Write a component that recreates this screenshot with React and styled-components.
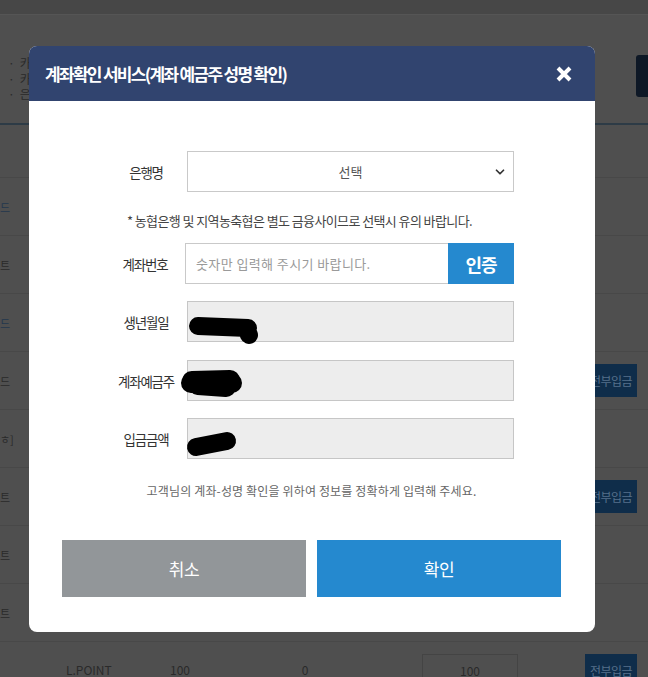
import React from 'react'
import styled, { createGlobalStyle } from 'styled-components'
import { ChevronDown } from 'lucide-react'

const GlobalStyle = createGlobalStyle`
  html, body {
    margin: 0;
    padding: 0;
    background: #4f4f4f;
    font-family: "Noto Sans CJK KR", "Noto Sans", sans-serif;
    overflow: hidden;
  }
`

/* ---------- dimmed page behind the modal ---------- */

const Page = styled.div`
  width: 648px;
  height: 677px;
  background: #4f4f4f;
  overflow: hidden;
  position: relative;
`

const TopBar = styled.div`
  height: 14px;
  background: #474747;
  border-bottom: 1px solid #555;
`

const InfoSection = styled.div`
  display: flex;
  justify-content: space-between;
  align-items: flex-start;
  height: 110px;
  padding-top: 40px;
  box-sizing: border-box;
  border-bottom: 2px solid #2d3b46;
`

const BulletList = styled.ul`
  list-style: none;
  margin: 0 0 0 8px;
  padding: 0;
  font-size: 12px;
  line-height: 15.5px;
  color: #2a2a2a;
  li::before {
    content: '·';
    margin-right: 5px;
  }
`

const DarkButton = styled.div`
  width: 40px;
  height: 42px;
  margin-right: -28px;
  background: #0e1826;
  border-radius: 3px;
`

const Table = styled.div`
  margin-top: 52px;
  border-top: 1px solid #484848;
`

const Row = styled.div`
  display: grid;
  grid-template-columns: 12px 146px 100px 94px 70px 96px 67px 52px 11px;
  align-items: ${({ $top }) => ($top ? 'start' : 'center')};
  height: 58px;
  padding-top: ${({ $top }) => ($top ? '12px' : '0')};
  border-bottom: 1px solid #484848;
  box-sizing: border-box;
  font-size: 12px;
  line-height: 16px;
  color: #2a2a2a;
`

const EdgeCell = styled.div`
  white-space: nowrap;
  font-size: 11px;
  color: ${({ $blue }) => ($blue ? '#23374d' : '#2a2a2a')};
`

const Cell = styled.div`
  text-align: ${({ $align }) => $align || 'left'};
  padding-left: ${({ $pad }) => $pad || 0}px;
  margin-top: ${({ $top }) => $top || 0}px;
`

const AmountBox = styled.div`
  height: 32px;
  border: 1px solid #444;
  display: flex;
  align-items: center;
  justify-content: center;
`

const PayAll = styled.div`
  height: 33px;
  background: #0f2d4a;
  color: #56708a;
  font-size: 12px;
  display: flex;
  align-items: center;
  justify-content: center;
  letter-spacing: -0.5px;
`

/* ---------- modal ---------- */

const Modal = styled.div`
  position: absolute;
  left: 29px;
  top: 46px;
  width: 566px;
  background: #fff;
  border-radius: 8px;
  overflow: hidden;
`

const Header = styled.div`
  height: 55px;
  background: #31446f;
  display: flex;
  align-items: center;
  justify-content: space-between;
  padding: 0 23px 0 16px;
`

const Title = styled.h2`
  margin: 0;
  color: #fff;
  font-size: 17px;
  font-weight: 700;
  letter-spacing: -1.7px;
`

const CloseButton = styled.button`
  border: 0;
  background: none;
  padding: 0;
  width: 16px;
  height: 16px;
  display: flex;
  cursor: pointer;
`

const Body = styled.div`
  padding: 50px 34px 35px 33px;
`

const Form = styled.div`
  width: 409px;
  margin-left: 43px;
`

const FieldRow = styled.div`
  display: flex;
  align-items: center;
  height: 41px;
  margin-top: ${({ $gap }) => $gap || 0}px;
`

const Label = styled.label`
  width: ${({ $w }) => $w || 82}px;
  flex-shrink: 0;
  text-align: center;
  font-size: 13.5px;
  letter-spacing: -1.2px;
  color: #333;
`

const Select = styled.div`
  flex: 1;
  height: 100%;
  box-sizing: border-box;
  border: 1px solid #c9c9c9;
  position: relative;
  display: flex;
  align-items: center;
  justify-content: center;
  font-size: 13px;
  color: #555;
  svg {
    position: absolute;
    right: 6px;
    top: 13px;
  }
`

const Notice = styled.p`
  margin: 0 0 0 -20px;
  padding: 20px 0 13px;
  line-height: 18px;
  font-size: 13px;
  letter-spacing: -0.6px;
  color: #444;
  text-align: center;
  white-space: nowrap;
`

const TextInput = styled.input`
  flex: 1;
  height: 100%;
  box-sizing: border-box;
  border: 1px solid #c9c9c9;
  border-right: 0;
  padding: 0 0 0 10px;
  font-family: inherit;
  font-size: 13px;
  outline: none;
  &::placeholder {
    color: #9a9a9a;
    letter-spacing: 0.4px;
  }
`

const VerifyButton = styled.button`
  width: 66px;
  height: 100%;
  border: 0;
  background: #2589cf;
  color: #fff;
  font-family: inherit;
  font-size: 18px;
  font-weight: 700;
  letter-spacing: -1px;
  flex-shrink: 0;
`

const ReadonlyBox = styled.div`
  flex: 1;
  height: 100%;
  box-sizing: border-box;
  border: 1px solid #c6c6c6;
  background: #ededed;
  position: relative;
`

const Scribble = styled.svg`
  position: absolute;
  left: -8px;
  top: 0;
  overflow: visible;
`

const Guide = styled.p`
  margin: 23px 0 40px;
  line-height: 18px;
  font-size: 12px;
  letter-spacing: 0.15px;
  color: #666;
  text-align: center;
  white-space: nowrap;
`

const Buttons = styled.div`
  display: flex;
  gap: 11px;
`

const ActionButton = styled.button`
  flex: 1;
  height: 57px;
  border: 0;
  background: ${({ $primary }) => ($primary ? '#2589cf' : '#929699')};
  color: #fff;
  font-family: inherit;
  font-size: 17px;
  letter-spacing: -0.5px;
  cursor: pointer;
`

const scribbles = {
  birth: { d: 'M18 24 L68 26 M66 26 L69 33', w: 18 },
  holder: { d: 'M12 20 L50 19 M11 22 L52 22 M18 24 L46 26', w: 20 },
  amount: { d: 'M16 28 L47 22', w: 18 },
}

const Redacted = ({ kind }) => (
  <Scribble width="80" height="40">
    <path
      d={scribbles[kind].d}
      stroke="#000"
      strokeWidth={scribbles[kind].w}
      strokeLinecap="round"
      fill="none"
    />
  </Scribble>
)

const rows = [
  { left: '드', blue: true },
  { left: '트' },
  { left: '드', blue: true },
  { left: '드', pay: true },
  { left: 'ㅎ]' },
  { left: '트', pay: true },
  { left: '트' },
  { left: '트' },
]

export default function App() {
  return (
    <>
      <GlobalStyle />
      <Page>
        <TopBar />
        <InfoSection>
          <BulletList>
            <li>카</li>
            <li>카</li>
            <li>은</li>
          </BulletList>
          <DarkButton />
        </InfoSection>
        <Table>
          {rows.map((r, i) => (
            <Row key={i}>
              <EdgeCell $blue={r.blue}>{r.left}</EdgeCell>
              <Cell />
              <Cell />
              <Cell />
              <Cell />
              <Cell />
              <Cell />
              {r.pay ? <PayAll>전부입금</PayAll> : <Cell />}
            </Row>
          ))}
          <Row $top>
            <EdgeCell />
            <Cell $pad={54} $top={8}>L.POINT</Cell>
            <Cell $pad={12} $top={8}>100</Cell>
            <Cell $align="center" $top={8}>0</Cell>
            <Cell />
            <AmountBox>100</AmountBox>
            <Cell />
            <PayAll>전부입금</PayAll>
          </Row>
        </Table>

        <Modal>
          <Header>
            <Title>계좌확인 서비스(계좌 예금주 성명 확인)</Title>
            <CloseButton aria-label="닫기">
              <svg width="16" height="16" viewBox="0 0 16 16">
                <path d="M2 2 L14 14 M14 2 L2 14" stroke="#fff" strokeWidth="4" />
              </svg>
            </CloseButton>
          </Header>
          <Body>
            <Form>
              <FieldRow>
                <Label>은행명</Label>
                <Select>
                  선택
                  <ChevronDown size={14} strokeWidth={3} color="#333" />
                </Select>
              </FieldRow>
              <Notice>* 농협은행 및 지역농축협은 별도 금융사이므로 선택시 유의 바랍니다.</Notice>
              <FieldRow>
                <Label $w={80}>계좌번호</Label>
                <TextInput placeholder="숫자만 입력해 주시기 바랍니다." />
                <VerifyButton>인증</VerifyButton>
              </FieldRow>
              <FieldRow $gap={17}>
                <Label>생년월일</Label>
                <ReadonlyBox>
                  <Redacted kind="birth" />
                </ReadonlyBox>
              </FieldRow>
              <FieldRow $gap={18}>
                <Label>계좌예금주</Label>
                <ReadonlyBox>
                  <Redacted kind="holder" />
                </ReadonlyBox>
              </FieldRow>
              <FieldRow $gap={17}>
                <Label>입금금액</Label>
                <ReadonlyBox>
                  <Redacted kind="amount" />
                </ReadonlyBox>
              </FieldRow>
            </Form>
            <Guide>고객님의 계좌-성명 확인을 위하여 정보를 정확하게 입력해 주세요.</Guide>
            <Buttons>
              <ActionButton>취소</ActionButton>
              <ActionButton $primary>확인</ActionButton>
            </Buttons>
          </Body>
        </Modal>
      </Page>
    </>
  )
}
